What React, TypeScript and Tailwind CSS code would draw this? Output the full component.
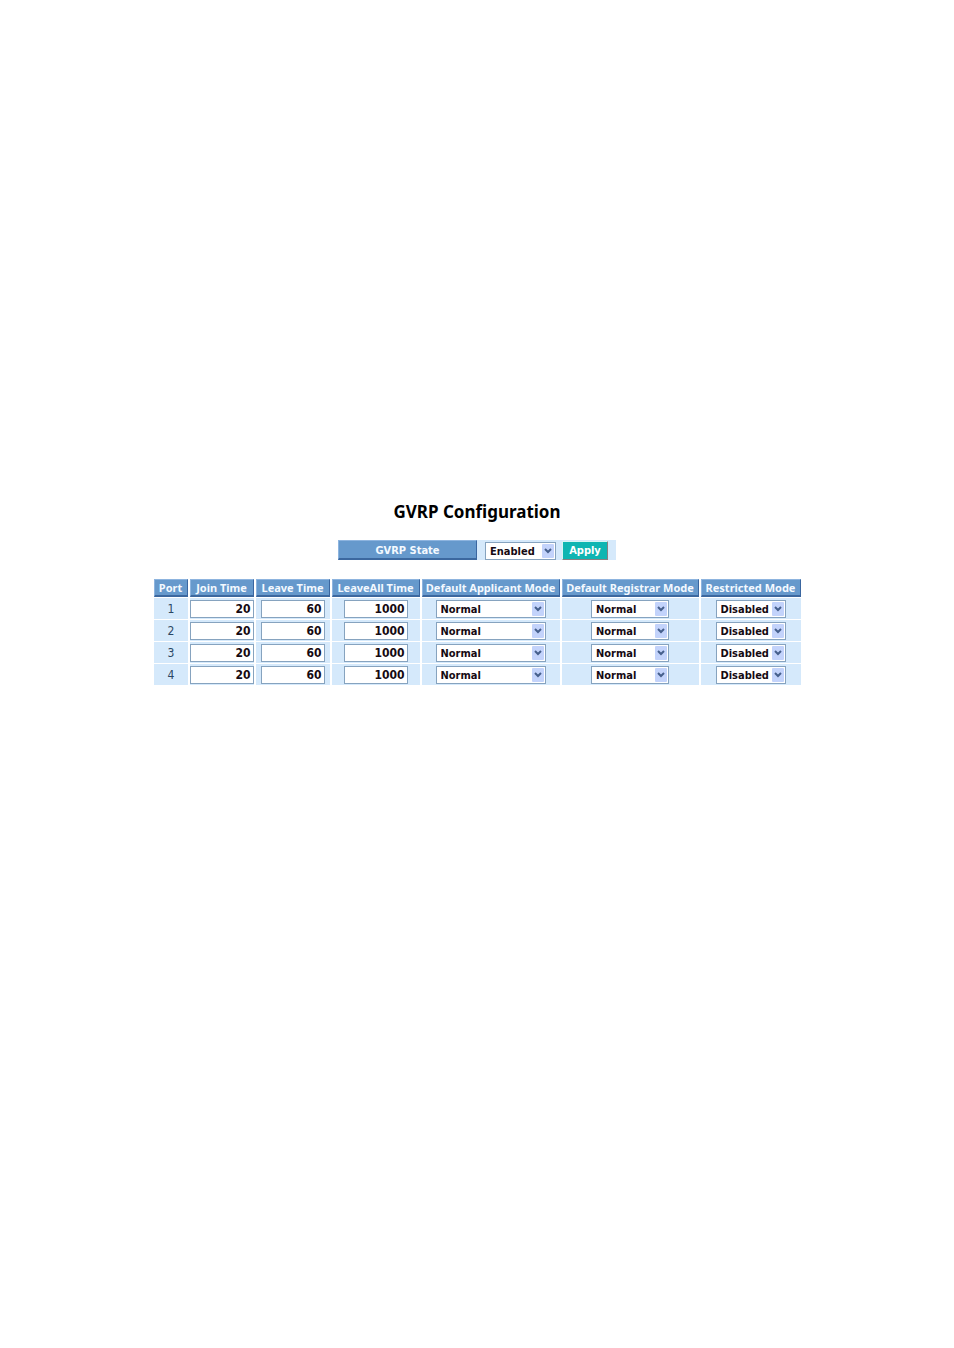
import { useState } from "react";

type Row = {
  port: number;
  join: string;
  leave: string;
  leaveAll: string;
  applicant: string;
  registrar: string;
  restricted: string;
};

const initialRows: Row[] = [1, 2, 3, 4].map((port) => ({
  port,
  join: "20",
  leave: "60",
  leaveAll: "1000",
  applicant: "Normal",
  registrar: "Normal",
  restricted: "Disabled",
}));

const headCell =
  "h-[18px] border border-t-[#8db4df] border-l-[#8db4df] border-r-[#3a66a0] border-b-2 border-b-[#3c689f] bg-[#6699cc] px-0 pt-px pb-0 text-center font-['Noto_Sans',sans-serif] leading-[14px] font-bold whitespace-nowrap text-[#f4f9ff]";
const bodyCell = "h-[21px] bg-[#d5e9fb] px-0 pb-0 text-center align-middle";

function Select({
  label,
  value,
  options,
  width,
  onChange,
}: {
  label: string;
  value: string;
  options: string[];
  width: string;
  onChange: (value: string) => void;
}) {
  return (
    <span className={`relative inline-block h-[18px] align-middle ${width}`}>
      <select
        aria-label={label}
        value={value}
        onChange={(e) => onChange(e.target.value)}
        className="block h-[18px] w-full appearance-none border border-[#86a3bf] bg-white pt-px pr-4 pb-0 pl-1 text-[11px] leading-[15px] font-bold text-[#150a12]"
      >
        {options.map((option) => (
          <option key={option}>{option}</option>
        ))}
      </select>
      <span className="pointer-events-none absolute top-0.5 right-0.5 flex h-3.5 w-3 items-center justify-center rounded-[1px] bg-[#c3d3fb]">
        <svg width="8" height="6" viewBox="0 0 8 6" fill="none" aria-hidden="true">
          <path d="M1 1 L4 4 L7 1" stroke="#465f8c" strokeWidth="2" />
        </svg>
      </span>
    </span>
  );
}

function TimeInput({
  label,
  value,
  onChange,
}: {
  label: string;
  value: string;
  onChange: (value: string) => void;
}) {
  return (
    <input
      type="text"
      aria-label={label}
      value={value}
      onChange={(e) => onChange(e.target.value)}
      className="inline-block h-[18px] w-16 border border-[#86a3bf] bg-white pt-px pr-0.5 pb-0 pl-1 text-right align-middle text-[12px] leading-[15px] font-bold text-[#150a12]"
    />
  );
}

export default function App() {
  const [state, setState] = useState("Enabled");
  const [rows, setRows] = useState(initialRows);

  const update = (port: number, key: keyof Row, value: string) =>
    setRows((all) => all.map((row) => (row.port === port ? { ...row, [key]: value } : row)));

  return (
    <main className="flex flex-col items-center bg-white pt-[500px] pb-8 font-['DejaVu_Sans_Condensed','DejaVu_Sans',sans-serif] text-[11px] leading-[15px]">
      <h1 className="font-['Noto_Sans',sans-serif] text-[17px] leading-6 font-bold text-black">
        GVRP Configuration
      </h1>

      <form
        className="mt-4 flex h-5 w-[278px] items-center bg-[#d5e9fb]"
        onSubmit={(e) => e.preventDefault()}
      >
        <span className="h-5 w-[139px] border border-t-[#8db4df] border-r-[#3a66a0] border-b-2 border-b-[#3c689f] border-l-[#8db4df] bg-[#6699cc] pt-0.5 text-center font-bold text-[#f4f9ff]">
          GVRP State
        </span>
        <span className="mt-px ml-2 flex">
          <Select
            label="GVRP State"
            value={state}
            options={["Enabled", "Disabled"]}
            width="w-[71px]"
            onChange={setState}
          />
        </span>
        <button
          type="submit"
          className="ml-1.5 h-[19px] w-[46px] border border-t-[#d9f5f3] border-r-[#8a7f80] border-b-[#8a7f80] border-l-[#d9f5f3] bg-[#0fb5b2] px-0 pt-px pb-0 text-center leading-4 font-bold text-white"
        >
          Apply
        </button>
      </form>

      <table className="mt-[18px] w-[651px] table-fixed border-separate border-spacing-x-0.5 border-spacing-y-px">
        <colgroup>
          <col className="w-[34px]" />
          <col className="w-16" />
          <col className="w-[74px]" />
          <col className="w-[88px]" />
          <col className="w-[138px]" />
          <col className="w-[137px]" />
          <col className="w-[100px]" />
        </colgroup>
        <thead>
          <tr>
            {[
              "Port",
              "Join Time",
              "Leave Time",
              "LeaveAll Time",
              "Default Applicant Mode",
              "Default Registrar Mode",
              "Restricted Mode",
            ].map((title) => (
              <th key={title} scope="col" className={headCell}>
                {title}
              </th>
            ))}
          </tr>
        </thead>
        <tbody>
          {rows.map((row) => (
            <tr key={row.port}>
              <td className={`${bodyCell} pt-0.5 pl-px text-[12px] text-[#2b4763]`}>{row.port}</td>
              <td className={`${bodyCell} pt-0`}>
                <TimeInput
                  label={`Join Time, port ${row.port}`}
                  value={row.join}
                  onChange={(v) => update(row.port, "join", v)}
                />
              </td>
              <td className={`${bodyCell} pt-0`}>
                <TimeInput
                  label={`Leave Time, port ${row.port}`}
                  value={row.leave}
                  onChange={(v) => update(row.port, "leave", v)}
                />
              </td>
              <td className={`${bodyCell} pt-0`}>
                <TimeInput
                  label={`LeaveAll Time, port ${row.port}`}
                  value={row.leaveAll}
                  onChange={(v) => update(row.port, "leaveAll", v)}
                />
              </td>
              <td className={`${bodyCell} pt-0`}>
                <Select
                  label={`Default Applicant Mode, port ${row.port}`}
                  value={row.applicant}
                  options={["Normal", "Non-Participant"]}
                  width="w-[110px]"
                  onChange={(v) => update(row.port, "applicant", v)}
                />
              </td>
              <td className={`${bodyCell} pt-0`}>
                <Select
                  label={`Default Registrar Mode, port ${row.port}`}
                  value={row.registrar}
                  options={["Normal", "Fixed", "Forbidden"]}
                  width="w-[78px]"
                  onChange={(v) => update(row.port, "registrar", v)}
                />
              </td>
              <td className={`${bodyCell} pt-0`}>
                <Select
                  label={`Restricted Mode, port ${row.port}`}
                  value={row.restricted}
                  options={["Disabled", "Enabled"]}
                  width="w-[70px]"
                  onChange={(v) => update(row.port, "restricted", v)}
                />
              </td>
            </tr>
          ))}
        </tbody>
      </table>
    </main>
  );
}
